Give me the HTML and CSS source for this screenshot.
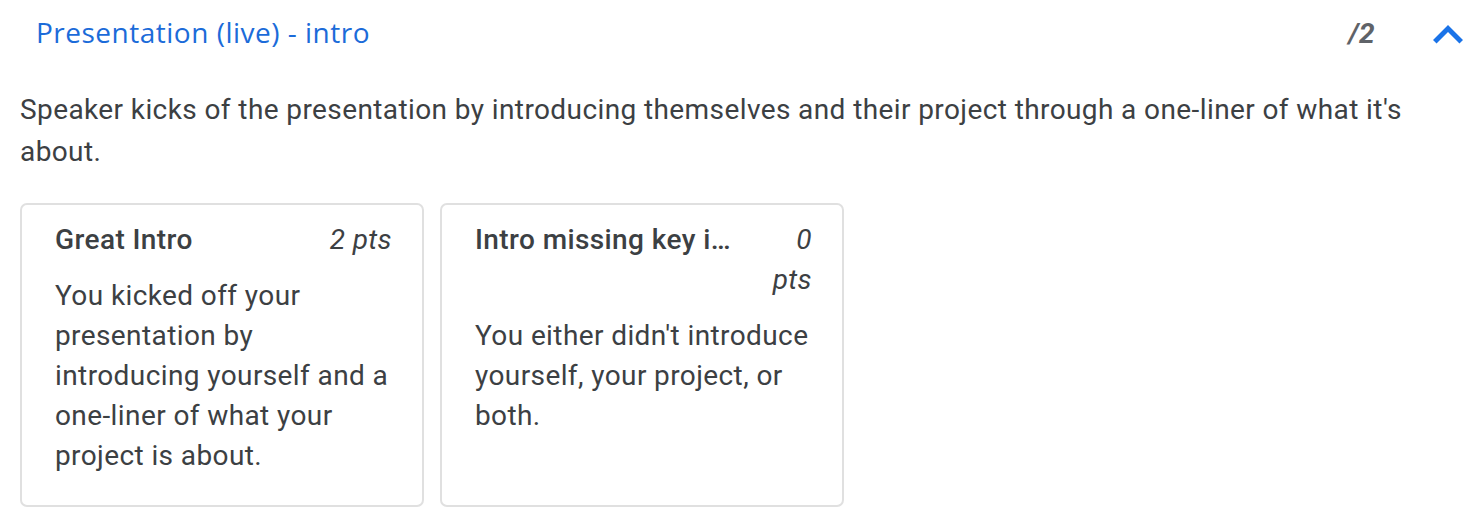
FILE: index.html
```html
<!DOCTYPE html>
<html lang="en">
<head>
<meta charset="utf-8">
<title>Rubric criterion</title>
<link rel="stylesheet" href="styles.css">
</head>
<body>
<section class="criterion">
  <header class="crit-head">
    <h2 class="crit-title">Presentation (live) - intro</h2>
    <span class="crit-score">/2</span>
    <button class="collapse-btn" aria-label="Collapse">
      <svg viewBox="0 0 24 24" width="60" height="60" aria-hidden="true"><path d="M12 8l-6 6 1.41 1.41L12 10.83l4.59 4.58L18 14z" fill="#1a73e8"/></svg>
    </button>
  </header>
  <p class="crit-desc">Speaker kicks of the presentation by introducing themselves and their project through a one-liner of what it's about.</p>
  <div class="levels">
    <div class="level">
      <div class="level-head">
        <span class="level-title">Great Intro</span>
        <span class="level-pts">2 pts</span>
      </div>
      <p class="level-desc">You kicked off your presentation by introducing yourself and a one-liner of what your project is about.</p>
    </div>
    <div class="level">
      <div class="level-head">
        <span class="level-title">Intro missing key information</span>
        <span class="level-pts">0 pts</span>
      </div>
      <p class="level-desc">You either didn't introduce yourself, your project, or both.</p>
    </div>
  </div>
</section>
</body>
</html>
```

FILE: styles.css
```css
* { box-sizing: border-box; }
html, body { margin: 0; padding: 0; background: #fff; }
body {
  font-family: Roboto, "Liberation Sans", Arial, sans-serif;
  color: #3c4043;
  letter-spacing: 0.4px;
}
.criterion {
  padding: 0 19px 0 20px;
}
.crit-head {
  display: flex;
  align-items: center;
  height: 64px;
  padding-left: 16px;
}
.crit-title {
  flex: 1 1 auto;
  margin: 0;
  font-family: "Open Sans", Roboto, sans-serif;
  font-weight: 500;
  font-size: 28px;
  line-height: 40px;
  letter-spacing: 0.5px;
  color: #1b6bd9;
}
.crit-score {
  font-size: 28px;
  line-height: 40px;
  padding-top: 3px;
  font-style: italic;
  font-weight: 700;
  color: #5f6368;
  margin-right: 43px;
}
.collapse-btn {
  align-self: flex-start;
  margin-top: 5px;
  width: 60px;
  height: 60px;
  margin-right: -15px;
  padding: 0;
  border: 0;
  background: none;
  display: flex;
  align-items: center;
  justify-content: center;
}
.collapse-btn svg { display: block; }
.crit-desc {
  margin: 25px 0 30px;
  font-size: 28px;
  line-height: 42px;
  color: #3c4043;
}
.levels {
  display: flex;
  gap: 16px;
  align-items: stretch;
}
.level {
  width: 404px;
  border: 2px solid #e0e0e0;
  border-radius: 7px;
  padding: 15px 30px 29px 33px;
}
.level-head {
  display: flex;
  gap: 28px;
  align-items: flex-start;
  font-size: 28px;
  line-height: 40px;
}
.level-title {
  flex: 1 1 auto;
  min-width: 0;
  white-space: nowrap;
  overflow: hidden;
  text-overflow: ellipsis;
  font-weight: 500;
  color: #3c4043;
}
.level-pts {
  flex: 0 1 auto;
  text-align: right;
  font-style: italic;
  color: #3c4043;
}
.level-desc {
  margin: 16px 0 0;
  font-size: 28px;
  line-height: 40px;
  color: #3c4043;
}
```
